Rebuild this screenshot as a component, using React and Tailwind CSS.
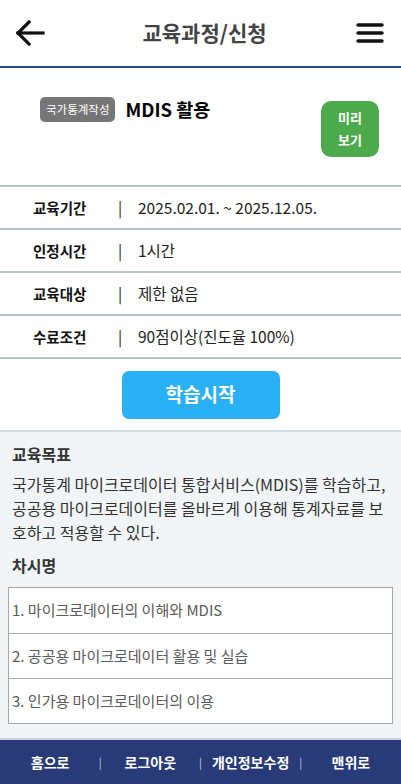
import React from 'react';

const rows = [
  { label: '교육기간', value: '2025.02.01. ~ 2025.12.05.' },
  { label: '인정시간', value: '1시간' },
  { label: '교육대상', value: '제한 없음' },
  { label: '수료조건', value: '90점이상(진도율 100%)' },
];

const lessons = [
  '1. 마이크로데이터의 이해와 MDIS',
  '2. 공공용 마이크로데이터 활용 및 실습',
  '3. 인가용 마이크로데이터의 이용',
];

const navItems = ['홈으로', '로그아웃', '개인정보수정', '맨위로'];

export default function App() {
  return (
    <div className="w-[401px] h-[784px] flex flex-col bg-white overflow-hidden font-['Noto_Sans_CJK_KR','Noto_Sans',sans-serif]">
      {/* 상단 헤더 */}
      <header className="h-[68px] shrink-0 flex items-center justify-between px-[15px] border-b-2 border-[#2c4a8a]">
        <svg width="32" height="28" viewBox="0 0 32 28" fill="none" stroke="#111" strokeWidth="3.2" strokeLinecap="square">
          <path d="M3 14 H28" />
          <path d="M14 3 L3 14 L14 25" />
        </svg>
        <h1 className="text-[21px] font-bold text-[#444] ml-[6px]">교육과정/신청</h1>
        <svg width="30" height="24" viewBox="0 0 30 24" fill="none" stroke="#111" strokeWidth="3.4" strokeLinecap="round">
          <path d="M2 4 H26" />
          <path d="M2 12 H26" />
          <path d="M2 20 H26" />
        </svg>
      </header>

      {/* 과정 제목 */}
      <div className="h-[117px] shrink-0 flex items-start justify-between pl-[40px] pr-[22px] pt-[28px]">
        <div className="flex items-center gap-[10px]">
          <span className="bg-[#767676] text-white text-[11.5px] rounded-[5px] px-[6px] h-[25px] flex items-center">국가통계작성</span>
          <span className="text-[18.5px] font-bold text-black">MDIS 활용</span>
        </div>
        <button className="mt-[5px] w-[58px] h-[56px] rounded-[10px] bg-[#4caa4c] text-white text-[13px] font-bold leading-[22px] flex flex-col items-center justify-center">
          <span>미리</span>
          <span>보기</span>
        </button>
      </div>

      {/* 과정 정보 */}
      <div className="shrink-0 border-t-2 border-[#b5c2c9]">
        {rows.map((r) => (
          <div key={r.label} className="h-[43px] flex items-center border-b-2 border-[#b5c2c9] text-[15.5px]">
            <span className="w-[85px] ml-[33px] font-bold text-[14.5px] text-[#111]">{r.label}</span>
            <span className="w-[20px] text-[#222]">|</span>
            <span className="text-[#222]">{r.value}</span>
          </div>
        ))}
      </div>

      <div className="h-[71px] shrink-0 flex items-center justify-center">
        <button className="w-[158px] h-[48px] rounded-[7px] bg-[#2ab1f5] text-white text-[19px] font-bold">학습시작</button>
      </div>

      {/* 교육목표 / 차시명 */}
      <div className="flex-1 bg-[#f1f5f8] border-t-2 border-[#d3dbe0] px-[8px] pt-[10px]">
        <h2 className="px-[4px] text-[16px] font-bold text-[#333]">교육목표</h2>
        <p className="px-[4px] mt-[6px] text-[16px] leading-[24px] text-[#333]">
          국가통계 마이크로데이터 통합서비스(MDIS)를 학습하고, 공공용 마이크로데이터를 올바르게 이용해 통계자료를 보호하고 적용할 수 있다.
        </p>
        <h2 className="px-[4px] mt-[9px] text-[16px] font-bold text-[#333]">차시명</h2>
        <ul className="mt-[10px] bg-white border border-[#a8a8a8]">
          {lessons.map((l, i) => (
            <li key={l} className={`h-[45px] flex items-center px-[3px] text-[15px] text-[#5a5a5a] ${i > 0 ? 'border-t border-[#a8a8a8]' : ''}`}>
              {l}
            </li>
          ))}
        </ul>
      </div>

      {/* 하단 메뉴 */}
      <nav className="h-[46px] shrink-0 bg-[#283b78] border-t-2 border-[#c9d2dc] flex items-center">
        {navItems.map((n, i) => (
          <React.Fragment key={n}>
            {i > 0 && <span className="w-0 flex justify-center text-[11px] text-[#c6cde0]">|</span>}
            <span className="flex-1 text-center text-white text-[14px] font-bold">{n}</span>
          </React.Fragment>
        ))}
      </nav>
    </div>
  );
}
